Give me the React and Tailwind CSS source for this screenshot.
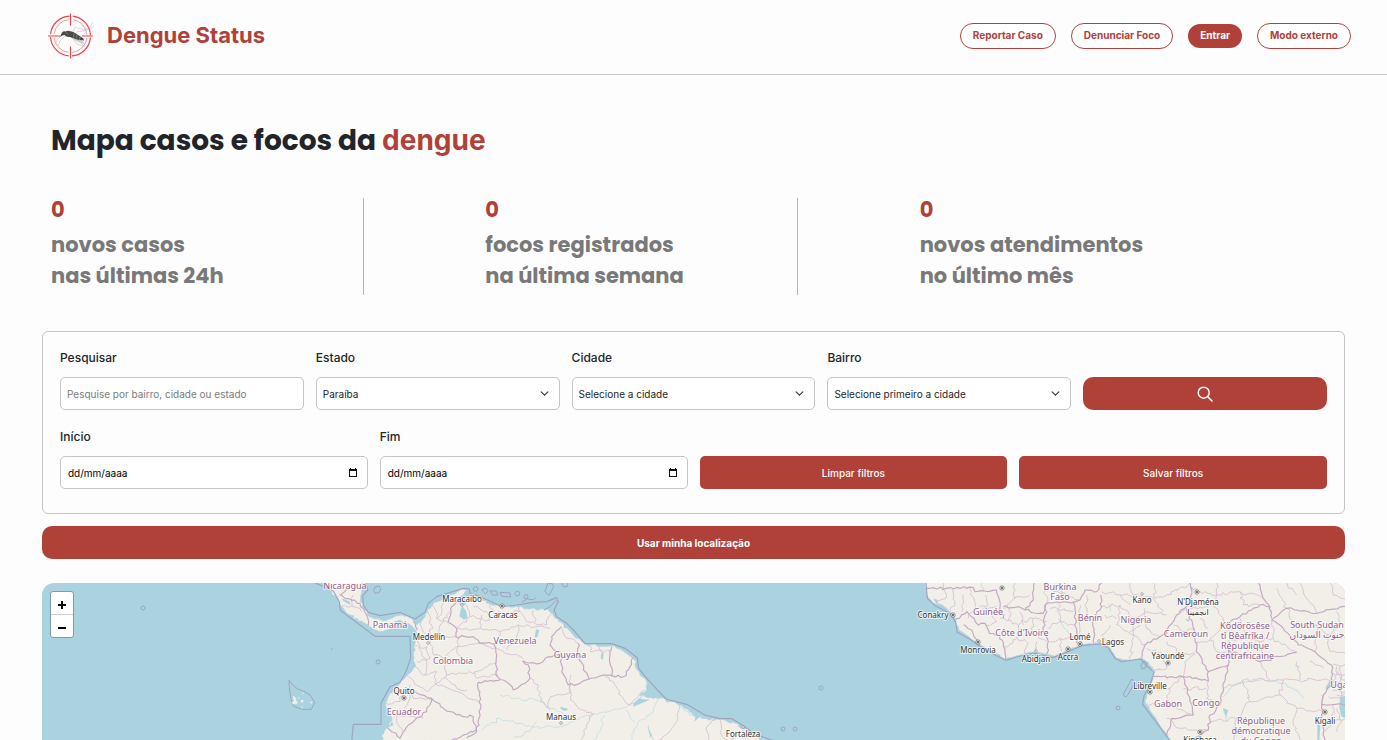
import React from "react";

const SANS = "font-['Inter',sans-serif]";
const DISPLAY = "font-['Poppins','Inter',sans-serif]";

/* ---------- map drawing helpers ---------- */

// Turns a coarse polyline "x,y x,y ..." into a wavering path, like a surveyed border.
function rough(str, amp = 5, step = 10) {
  const pts = str.trim().split(/\s+/).map((p) => p.split(",").map(Number));
  let seed = pts[0][0] * 7 + pts[0][1] * 13 + pts.length;
  const rnd = () => {
    seed = (seed * 9301 + 49297) % 233280;
    return seed / 233280 - 0.5;
  };
  let d = `M${pts[0][0]} ${pts[0][1]}`;
  for (let i = 1; i < pts.length; i++) {
    const [x0, y0] = pts[i - 1];
    const [x1, y1] = pts[i];
    const n = Math.max(1, Math.round(Math.hypot(x1 - x0, y1 - y0) / step));
    for (let k = 1; k <= n; k++) {
      const j = k === n ? 0 : 1;
      const x = x0 + ((x1 - x0) * k) / n + rnd() * amp * 2 * j;
      const y = y0 + ((y1 - y0) * k) / n + rnd() * amp * 2 * j;
      d += `L${x.toFixed(1)} ${y.toFixed(1)}`;
    }
  }
  return d;
}

const AMERICA =
  "78,20 95,50 113,75 125,95 150,120 190,142 215,158 240,170 265,164 290,150 310,143 332,150 350,172 345,205 340,240 346,275 322,300 296,330 268,355 256,385 260,410 276,430 268,455 252,470 244,500 1395,500 1362,482 1332,462 1300,442 1260,434 1215,430 1185,425 1165,405 1138,390 1110,380 1077,370 1020,362 1040,345 1040,320 1012,285 1004,255 985,240 960,222 935,213 890,212 855,208 820,180 790,148 765,130 745,102 690,102 650,94 600,94 570,86 545,70 522,62 500,72 496,90 480,88 470,74 485,62 500,46 488,42 465,56 430,70 402,82 382,110 362,142 350,150 335,130 318,122 290,122 260,136 225,132 203,120 188,95 182,70 184,20";

const AMERICA_BORDERS = [
  "485,64 455,95 445,140 470,160 468,185 520,185 540,205 585,205 590,240 588,300 625,325 640,345 690,310 685,270 668,258",
  "668,258 720,265 745,245 785,240 750,210 755,185 785,155",
  "785,240 785,290 805,330 840,325 868,312",
  "835,205 838,255 868,312 915,300 935,302 930,240 935,215",
  "935,302 970,305 990,275 998,248",
  "600,315 535,322 538,360 542,400 530,470 500,490",
  "345,350 395,370 430,400 470,420 520,425 528,465 455,495",
  "262,458 300,490 325,450 380,410 395,370",
  "150,40 120,60 180,85 200,120 205,150",
  "340,140 352,165",
];

const AMERICA_REGIONS = [
  "400,85 410,130 445,145", "430,72 425,110 410,130", "362,142 380,190 440,185 468,185", "382,110 395,150 390,195",
  "345,215 380,215 390,250 350,260", "390,195 400,240 430,250 470,215 530,205", "430,250 440,300 525,290 590,262",
  "440,300 380,350 320,300", "410,290 405,325 470,350 535,380", "435,305 470,340 500,345", "346,275 370,300 410,290",
  "525,290 530,310 595,300", "500,90 510,125 480,150 470,160", "520,95 560,110 570,135 510,125", "570,88 580,115 660,110 655,95",
  "470,165 540,160 600,170 655,150 750,160", "660,110 680,140 740,150 755,110", "600,170 590,205", "530,205 600,225 670,250",
  "655,150 650,190 620,225", "480,185 470,225 500,265", "690,310 715,330 722,380 750,405", "745,395 752,365 812,355 812,330",
  "812,300 812,375 835,400 880,420", "880,415 860,450 842,497", "915,305 940,320 975,380 990,392 1035,345",
  "1137,390 1130,440 1105,475 1070,497", "1247,434 1220,455 1225,497", "1262,436 1265,480 1285,497", "1330,465 1290,497",
  "790,240 835,240", "785,160 800,190 835,205", "868,209 872,230 910,228", "895,213 905,232 930,228", "260,410 300,420 370,430",
  "256,385 300,380 310,350", "300,400 290,440 310,470", "290,350 330,355 340,370 395,375", "160,60 155,90 185,110", "125,95 160,92",
  "415,180 420,150 450,110", "350,190 365,230 380,260 375,300", "545,120 540,160", "700,105 705,140", "330,330 325,380 300,420",
];

const RIVERS = [
  "600,360 660,370 720,378 750,400 790,415", "545,465 600,430 660,445 720,460 800,450 850,425 890,418 960,402 1010,385 1030,355",
  "910,420 905,455 880,497", "1075,372 1060,410 1015,440 990,497", "980,405 990,430 1005,440", "710,440 690,470 640,490",
  "1140,395 1170,420 1200,425", "1045,450 1060,497",
];

const AFRICA =
  "76,20 80,60 100,85 130,92 152,112 168,132 176,165 202,182 240,210 290,236 318,252 350,242 400,231 440,238 465,244 500,226 545,209 600,203 625,215 650,250 690,258 725,249 745,262 765,290 756,320 740,360 736,385 765,425 790,465 816,500 1340,500 1340,20";

const AFRICA_BORDERS = [
  "80,40 220,38 225,50 290,45 300,95 310,130", "168,132 200,110 235,150 255,145 268,175 300,180 310,215 318,252",
  "190,150 215,165 240,210", "310,95 355,95 375,105 400,75 402,24", "375,105 430,115 440,85 430,170 445,200 440,238",
  "440,85 520,82 525,120 530,205", "520,82 540,75 555,45 590,50 605,24", "580,203 582,130 605,95 603,60",
  "725,248 735,210 780,185 800,175 830,120 870,80 875,45 870,20", "860,100 880,160 885,200 895,235 925,290",
  "980,145 1020,125 1080,90 1110,95 1115,130", "1115,135 1150,160 1195,210 1245,230 1295,270",
  "1115,135 1160,100 1250,115 1340,95", "925,318 925,290 985,270 985,225 1080,260 1190,232",
  "755,305 850,305 925,318", "985,270 970,340 960,390 930,420 925,465 870,497", "850,305 870,370 880,420 815,430 800,480",
  "1295,270 1298,320 1270,360 1265,430 1275,497", "1265,388 1340,388", "1075,24 1090,70 1110,95",
];

const AFRICA_REGIONS = [
  "110,85 140,60 130,24", "150,110 165,80 160,40", "210,40 225,100 290,95", "225,100 205,130", "300,130 355,150 350,190 310,215",
  "355,150 400,130 440,140", "350,190 380,200 375,235", "400,130 395,180 440,200", "310,100 345,70 390,60", "345,24 345,70",
  "430,24 440,85", "460,50 500,60 540,75", "475,85 480,140 445,160", "480,140 525,150", "450,200 500,190 530,180",
  "480,190 485,230", "540,90 545,205", "560,60 560,130 582,140", "605,95 660,90 700,130 740,110 800,120", "630,150 605,180 640,215",
  "660,90 650,150 700,180 690,255", "700,130 700,180 735,210", "605,50 660,60 690,90", "690,20 700,60 660,60", "700,60 760,70 790,110",
  "735,100 740,160 780,185", "760,24 765,70", "830,120 860,100 940,90 980,145", "875,45 950,60 1020,50 1090,70", "950,24 950,60 940,90",
  "1020,50 1030,90 1080,90", "885,200 930,195 960,160 980,145", "930,195 950,230 985,240", "1020,130 1040,190 1080,200 1080,260",
  "1040,190 985,200", "1115,135 1120,190 1190,232", "1120,190 1080,200", "1160,100 1180,150 1250,150 1280,180 1340,190",
  "1250,150 1245,230", "1200,24 1220,70 1250,115", "1130,40 1160,100", "1280,180 1290,230 1340,240", "740,220 790,240 885,235",
  "790,240 800,280 755,290", "850,305 855,260 885,235", "755,345 810,340 850,305", "740,385 800,390 880,420", "810,340 800,390",
  "800,430 840,460 925,465", "925,318 920,370 960,390", "850,340 920,340", "970,340 1030,315 1150,315 1298,315",
  "1080,260 1110,315", "1150,315 1140,360 1190,400 1270,410", "1030,315 1050,380 1010,430 930,440", "1050,380 1140,360",
  "1190,260 1200,315", "1190,400 1180,450 1200,497", "1010,430 1000,497", "870,24 800,60 765,70", "1265,360 1265,388",
  "1300,270 1340,275", "1310,275 1300,320 1340,330", "1320,275 1325,380", "1300,295 1340,300", "1298,345 1340,350",
  "1285,365 1340,370", "1340,430 1300,440 1275,470", "1300,390 1300,440",
  "255,60 265,90 240,110", "190,60 185,110", "270,110 290,140 260,150", "330,100 325,135", "370,150 360,110", "410,200 405,228",
  "450,100 520,110", "490,60 485,24", "615,120 650,130", "670,200 640,190 615,215", "720,150 690,170", "800,200 830,230",
  "820,150 860,170 885,160", "900,130 925,160", "1290,24 1300,60 1340,70", "1190,60 1160,24", "1310,110 1320,150 1290,180",
  "1270,280 1230,260", "1310,290 1335,315", "1290,335 1330,340", "1335,355 1310,360", "1310,400 1325,440 1310,470",
];

const LABELS = {
  country: [
    ["Nicaragua", 345, 589], ["Panamá", 390, 628], ["Venezuela", 515, 644], ["Colombia", 453, 664], ["Guyana", 570, 658],
    ["Ecuador", 404, 715], ["Guinée", 988, 615], ["Burkina", 1060, 590], ["Faso", 1060, 600], ["Côte d'Ivoire", 1022, 636],
    ["Bénin", 1090, 621], ["Nigeria", 1136, 623], ["Cameroun", 1186, 637], ["Ködörösêse", 1245, 629], ["tî Bêafrîka /", 1245, 639],
    ["République", 1245, 649], ["centrafricaine", 1245, 659], ["South Sudan", 1317, 628], ["جنوب السودان", 1317, 638],
    ["Gabon", 1168, 707], ["Congo", 1206, 706], ["République", 1261, 724], ["démocratique", 1261, 734], ["du Congo", 1261, 744],
    ["Uganda", 1347, 688],
  ],
  city: [
    ["Maracaibo", 462, 602], ["Caracas", 503, 618], ["Medellín", 429, 640], ["Quito", 404, 694], ["Manaus", 561, 720],
    ["Fortaleza", 743, 737], ["Conakry", 933, 618], ["Monrovia", 978, 653], ["Abidjan", 1036, 662], ["Accra", 1068, 660],
    ["Lomé", 1080, 640], ["Lagos", 1113, 645], ["Kano", 1142, 603], ["N'Djaména", 1198, 605], ["انجمينا", 1198, 615],
    ["Yaoundé", 1168, 659], ["Libreville", 1150, 689], ["Kinshasa", 1200, 743], ["Kigali", 1325, 724],
  ],
};

const CAPITALS = [
  [502, 606], [404, 698], [953, 615], [978, 642], [1068, 649], [1080, 644], [1197, 592], [1168, 663], [1150, 692], [1200, 732],
  [1325, 712], [1002, 588],
];

const TOWNS = [[462, 605], [428, 643], [561, 723], [743, 727], [1036, 651], [1099, 641], [1142, 594]];

const ISLETS = [[143, 608, 2], [378, 662, 2], [821, 688, 2], [783, 729, 2], [795, 729, 2], [1118, 708, 2], [565, 584, 3]];

function Lines({ items, amp, ...rest }) {
  return (
    <g fill="none" strokeLinejoin="round" {...rest}>
      {items.map((s) => (
        <path key={s} d={rough(s, amp)} />
      ))}
    </g>
  );
}

function WorldMap() {
  return (
    <svg
      className="block h-full w-full bg-[#aad3df]"
      viewBox="42 583 1303 157"
      preserveAspectRatio="xMidYMin slice"
      role="img"
      aria-label="Mapa"
    >
      <g transform="translate(300 575) scale(0.33333)">
        <path d={rough(AMERICA, 4, 8)} fill="#f2efe9" stroke="#b4d3de" strokeWidth="2" />
        <g fill="none" stroke="#9fa3c2" strokeWidth="3.5" strokeLinejoin="round">
          <path d="M45 24L75 36L100 48L118 80L121 106L160 135L225 184H330L332 250L318 290L300 322L270 335L243 385V448H160L155 500" />
          <path d="M198 24L203 45L188 62L190 90L205 112L240 122L300 112L345 132L375 112L385 85L410 65L490 40L508 42L510 55L540 65L570 78L605 95L650 90L700 82L740 80L770 68L775 80L762 105L770 125L800 145L820 165L855 205L935 206L975 220L1012 248L1016 280L1040 310L1098 372L1160 388L1215 420L1260 431H1296L1330 452L1365 478L1420 497" />
          <path d="M225 36l12 -3l6 8l-6 12l-12 2l-4 -9zM520 42a7 7 0 1 0 14 0a7 7 0 1 0 -14 0M545 45l10 -6l10 8l-8 10zM570 48l18 0l6 12l-16 0zM600 52l30 2l2 12l-26 -2zM645 56a7 7 0 1 0 14 0a7 7 0 1 0 -14 0M735 50l8 -24h14l4 8l-14 28zM770 75l-20 20l-18 10M665 82l15 -10l20 2l8 -6M672 65a6 6 0 1 0 12 0a6 6 0 1 0 -12 0" strokeWidth="3" />
          <path d="M-33 315L-22 330L-7 342L10 348L30 360L44 382L34 403H5L-20 393L-28 370L-32 335z" strokeWidth="3" />
        </g>
        <path d="M-22 362l8 4l4 14l-8 2zM-25 382l12 -6l4 8l-12 4zM-12 376l6 8l-9 4zM2 376l8 -2v8l-6 1zM8 352l4 3l-4 4zM-6 366l5 1l-2 5zM30 382l8 -4l-5 9zM4 393l6 3l-5 3z" fill="#f2efe9" />
        <path d="M487 92L498 108L503 128L492 134L478 124L482 104zM708 162L718 166L712 186L704 188zM282 140L300 134L310 142L300 150L286 150zM125 70L150 80L150 90L130 78zM780 395L805 402L796 408L785 404zM905 232l6 8l-3 16l-6 -8z" fill="#aad3df" />
        <Lines items={RIVERS} amp={5} stroke="#c4dfe5" strokeWidth="2.5" />
        <path d="M1000 385L1030 360L1020 372L1050 374L1000 395zM1165 400L1200 425L1182 440L1188 424zM1043 455L1056 480L1052 490zM268 455l8 -18l4 14z" fill="#aad3df" />
        <Lines items={AMERICA_REGIONS} amp={5} stroke="#d3bfd2" strokeWidth="2.5" />
        <Lines items={AMERICA_BORDERS} amp={4} stroke="#c5a9c4" strokeWidth="3.5" />
        <circle cx="95" cy="222" r="2" fill="#9d9bbd" />
      </g>

      <g transform="translate(900 575) scale(0.33333)">
        <path d={rough(AFRICA, 2, 8)} fill="#f2efe9" stroke="#b4d3de" strokeWidth="2" />
        <g fill="none" stroke="#9fa3c2" strokeWidth="3.5" strokeLinejoin="round">
          <path d="M78 24L82 70L105 92L150 115L166 140L172 172L205 190L240 214L285 240L318 256L350 246L400 234L458 248L500 232L545 212L600 207L625 218L645 250L665 260L722 252L738 270L762 292L750 330L732 362L728 388L760 430L810 497" />
          <path d="M695 312L705 322L682 362Q674 370 670 358zM722 272l10 -14l9 6l-4 14l-10 4z" strokeWidth="3" />
        </g>
        <Lines
          items={["970,365 1000,330 1060,312 1130,318 1190,345 1210,370", "970,400 985,440", "475,130 500,165 510,190", "245,24 250,50", "625,85 632,110"]}
          amp={4}
          stroke="#c4dfe5"
          strokeWidth="3"
        />
        <path d="M1320 368L1340 360V430L1325 425L1318 400zM1252 430L1262 440L1258 497H1252zM970 400l15 6l-8 20zM1290 315l8 6l-18 24l-4 -6zM870 34l10 4l-5 10zM856 132l14 4l-8 4zM100 70l12 4l4 12l-10 -4z" fill="#aad3df" />
        <Lines items={AFRICA_REGIONS} amp={6} stroke="#d3bfd2" strokeWidth="2.5" />
        <Lines items={AFRICA_BORDERS} amp={4} stroke="#c5a9c4" strokeWidth="3.5" />
      </g>

      <g fill="none" stroke="#9d9bbd" strokeWidth="0.8">
        {ISLETS.map(([x, y, r]) => (
          <circle key={`${x}-${y}`} cx={x} cy={y} r={r} />
        ))}
      </g>

      {CAPITALS.map(([x, y]) => (
        <g key={`${x}-${y}`}>
          <circle cx={x} cy={y} r="2.2" fill="#f2efe9" stroke="#555" strokeWidth="0.6" />
          <circle cx={x} cy={y} r="0.9" fill="#333" />
        </g>
      ))}
      {TOWNS.map(([x, y]) => (
        <circle key={`${x}-${y}`} cx={x} cy={y} r="1.3" fill="#fff" stroke="#777" strokeWidth="0.6" />
      ))}

      <g
        className="font-['Noto_Sans','DejaVu_Sans',sans-serif] text-[9px]"
        textAnchor="middle"
        stroke="#ffffff"
        strokeOpacity="0.7"
        strokeWidth="2"
        strokeLinejoin="round"
        paintOrder="stroke"
      >
        <g fill="#8d618b">
          {LABELS.country.map(([t, x, y]) => (
            <text key={t + y} x={x} y={y}>{t}</text>
          ))}
        </g>
        <g fill="#333333" className="text-[8px]">
          {LABELS.city.map(([t, x, y]) => (
            <text key={t} x={x} y={y}>{t}</text>
          ))}
        </g>
      </g>
    </svg>
  );
}

/* ---------- page parts ---------- */

function Logo() {
  return (
    <svg className="size-[46px]" viewBox="0 0 46 46" fill="none" aria-hidden="true">
      <g stroke="#ee4248">
        <circle cx="22.500" cy="23" r="20" strokeWidth="1.200" strokeDasharray="28 3.416" strokeDashoffset="-1.700" />
        <circle cx="22.500" cy="23" r="16.500" strokeWidth="0.8" strokeOpacity="0.65" strokeDasharray="22 3.918" strokeDashoffset="-2" />
        <path d="M22.500 0.500V12.500M22.500 33.500V45.500M0 23H12M34 23H45" strokeWidth="1.200" />
      </g>
      <g stroke="#b5b5b5" strokeWidth="0.5" strokeLinejoin="round">
        <path d="M14 22L9 27L6 34M17 23L12 28L10 33M24 25L29 31L35 33M27 25L33 30L37 34M25 19L27 14L36 17L42 14L45 9M28 19L35 18L42 16L47 12" />
      </g>
      <path d="M22 21L31 24L37 31Q30 30 22 24z" fill="#bcbcbc" fillOpacity="0.7" />
      <path d="M12 23.500L14 19.500Q15.500 17.500 17.500 18.500Q20 17 23 18.500Q25 18.200 27 20L35.500 25.500L36 27.500L29 26.500L22 24Q18 24.500 16.500 22L14.500 22.500z" fill="#4b4a48" />
      <path d="M26 20.500L25.500 24.500M29 22L28.500 25.500M32 23.800L31.500 26.500M18 19.500L20 21.500" stroke="#aaa" strokeWidth="0.6" />
    </svg>
  );
}

function PillLink({ children }) {
  return (
    <a
      href="#"
      className="flex h-[26px] items-center rounded-full border border-[#af4139] bg-white px-3 text-[10px] font-bold text-[#af4139]"
    >
      {children}
    </a>
  );
}

const CONTROL = "block h-[33px] w-full rounded-[5px] border border-[#c4c4c4] bg-white text-[10px] outline-none";
const LABEL = "text-xs leading-[18px] font-medium text-[#212529]";

function SelectField({ id, label, options }) {
  return (
    <div className="flex flex-col gap-[10px]">
      <label htmlFor={id} className={LABEL}>{label}</label>
      <div className="relative">
        <select id={id} className={`${CONTROL} appearance-none px-[6px] pt-[2px] text-[#212529]`}>
          {options.map((o) => (
            <option key={o}>{o}</option>
          ))}
        </select>
        <svg className="pointer-events-none absolute top-3 right-[11px] size-[9px]" viewBox="0 0 16 16" fill="none" aria-hidden="true">
          <path d="M2 5l6 6 6-6" stroke="#343a40" strokeWidth="2" strokeLinecap="round" strokeLinejoin="round" />
        </svg>
      </div>
    </div>
  );
}

function DateField({ id, label }) {
  return (
    <div className="flex flex-col gap-[10px]">
      <label htmlFor={id} className={LABEL}>{label}</label>
      <div className="relative">
        <input id={id} type="text" placeholder="dd/mm/aaaa" className={`${CONTROL} px-[7px] placeholder:text-black`} />
        <button type="button" aria-label="Abrir calendário" className="absolute top-3 right-[10px] flex">
          <svg className="size-[10px]" viewBox="0 0 10 10" aria-hidden="true">
            <path fillRule="evenodd" d="M1 1H2V0H3V1H7V0H8V1H9V9H1zM2 3V8H8V3z" fill="#111" />
          </svg>
        </button>
      </div>
    </div>
  );
}

const STATS = [
  ["0", "novos casos", "nas últimas 24h"],
  ["0", "focos registrados", "na última semana"],
  ["0", "novos atendimentos", "no último mês"],
];

export default function App() {
  return (
    <div className={`flex min-h-screen flex-col bg-[#fdfdfd] ${SANS}`}>
      <header className="flex h-[75px] shrink-0 items-center justify-between border-b border-[#c6c6c6] pt-px pr-9 pb-1 pl-12">
        <a href="#" className="flex items-center gap-[13px]">
          <Logo />
          <span className="text-[22px] font-bold text-[#af4139]">Dengue Status</span>
        </a>
        <nav className="flex items-center gap-[15px]">
          <PillLink>Reportar Caso</PillLink>
          <PillLink>Denunciar Foco</PillLink>
          <button type="button" className="h-6 rounded-full bg-[#af4139] px-3 text-[10px] font-bold text-white">
            Entrar
          </button>
          <PillLink>Modo externo</PillLink>
        </nav>
      </header>

      <main className="flex grow flex-col px-[42px]">
        <h1 className={`mt-[43px] px-[9px] text-[28px] leading-[44px] font-bold text-[#212529] ${DISPLAY}`}>
          Mapa casos e focos da <span className={`font-bold text-[#af4139] ${SANS}`}>dengue</span>
        </h1>

        <section className={`mt-[35px] grid grid-cols-3 text-[21px] font-bold ${DISPLAY}`}>
          {STATS.map(([n, a, b], i) => (
            <div key={a} className="pl-[9px] pr-2">
              <div className={`h-[97px] w-3/4 whitespace-nowrap ${i < 2 ? "border-r border-[#b5b5b5]" : ""}`}>
                <p className="pb-[7px] leading-6 text-[#af4139]">{n}</p>
                <p className="leading-[31px] text-[#797979]">{a}</p>
                <p className="leading-[31px] text-[#797979]">{b}</p>
              </div>
            </div>
          ))}
        </section>

        <form className="mt-9 rounded-md border border-[#c4c4c4] px-[17px] pt-[17px] pb-6" onSubmit={(e) => e.preventDefault()}>
          <div className="grid grid-cols-5 items-end gap-3">
            <div className="flex flex-col gap-[10px]">
              <label htmlFor="pesquisar" className={LABEL}>Pesquisar</label>
              <input
                id="pesquisar"
                type="text"
                placeholder="Pesquise por bairro, cidade ou estado"
                className={`${CONTROL} px-[6px] placeholder:text-[#7b7b7b]`}
              />
            </div>
            <SelectField id="estado" label="Estado" options={["Paraíba"]} />
            <SelectField id="cidade" label="Cidade" options={["Selecione a cidade"]} />
            <SelectField id="bairro" label="Bairro" options={["Selecione primeiro a cidade"]} />
            <button type="submit" aria-label="Pesquisar" className="flex h-[33px] items-center justify-center rounded-[10px] bg-[#af4139]">
              <svg className="size-4" viewBox="0 0 16 16" fill="none" stroke="#fff" strokeWidth="1.5" strokeLinecap="round" aria-hidden="true">
                <circle cx="6.700" cy="6.700" r="5.500" />
                <path d="M10.800 10.800L15 15" />
              </svg>
            </button>
          </div>
          <div className="mt-[18px] grid grid-cols-4 items-end gap-3">
            <DateField id="inicio" label="Início" />
            <DateField id="fim" label="Fim" />
            <button type="reset" className="h-[33px] rounded-[5px] bg-[#af4139] pt-[2px] text-[10px] font-medium text-white">
              Limpar filtros
            </button>
            <button type="button" className="h-[33px] rounded-[5px] bg-[#af4139] pt-[2px] text-[10px] font-medium text-white">
              Salvar filtros
            </button>
          </div>
        </form>

        <button type="button" className="mt-3 h-[33px] shrink-0 rounded-[10px] bg-[#af4139] pt-[2px] text-[10px] font-bold text-white">
          Usar minha localização
        </button>

        <section className="relative mt-6 h-[157px] overflow-hidden rounded-t-xl">
          <WorldMap />
          <div className="absolute top-2 left-2 flex w-6 flex-col overflow-hidden rounded-[3px] border border-[#7c9ba4] bg-white">
            <button type="button" aria-label="Aproximar" className="flex h-[23px] items-center justify-center border-b border-[#cccccc] pt-1">
              <svg className="size-[10px]" viewBox="0 0 10 10" aria-hidden="true">
                <path d="M5 1V9M1 5H9" stroke="#000" strokeWidth="2" />
              </svg>
            </button>
            <button type="button" aria-label="Afastar" className="flex h-[22px] items-center justify-center pt-1">
              <svg className="size-[10px]" viewBox="0 0 10 10" aria-hidden="true">
                <path d="M1 5H9" stroke="#000" strokeWidth="2" />
              </svg>
            </button>
          </div>
        </section>
      </main>
    </div>
  );
}
